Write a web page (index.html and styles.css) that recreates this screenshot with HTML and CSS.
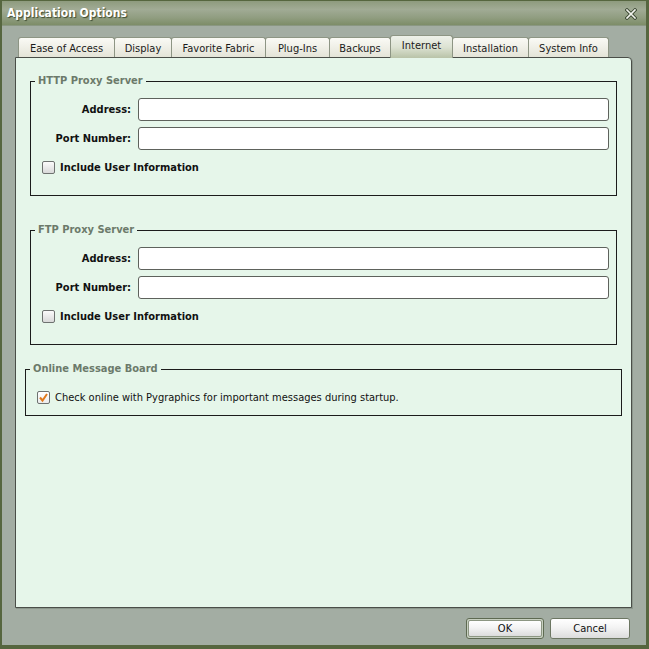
FILE: index.html
```html
<!DOCTYPE html>
<html>
<head>
<meta charset="utf-8">
<title>Application Options</title>
<link rel="stylesheet" href="styles.css">
</head>
<body>
<div class="window">
  <div class="titlebar">
    <span class="title">Application Options</span>
    <svg class="close" width="12" height="12" viewBox="0 0 12 12">
      <path d="M2 2 L10 10 M10 2 L2 10" stroke="#3d4a33" stroke-width="3.4" stroke-linecap="square"/>
      <path d="M2 2 L10 10 M10 2 L2 10" stroke="#f2f4ee" stroke-width="1.6" stroke-linecap="square"/>
    </svg>
  </div>
  <div class="main">
    <div class="tabs">
      <div class="tab t1">Ease of Access</div>
      <div class="tab t2">Display</div>
      <div class="tab t3">Favorite Fabric</div>
      <div class="tab t4">Plug-Ins</div>
      <div class="tab t5">Backups</div>
      <div class="tab t6 active">Internet</div>
      <div class="tab t7">Installation</div>
      <div class="tab t8">System Info</div>
    </div>
    <div class="panel">
      <fieldset class="group proxy first">
        <legend>HTTP Proxy Server</legend>
        <div class="form">
          <label class="lbl">Address:</label>
          <div class="input"></div>
          <label class="lbl">Port Number:</label>
          <div class="input"></div>
        </div>
        <div class="check-row">
          <span class="box"></span>
          <span class="check-label bold">Include User Information</span>
        </div>
      </fieldset>
      <fieldset class="group proxy second">
        <legend>FTP Proxy Server</legend>
        <div class="form">
          <label class="lbl">Address:</label>
          <div class="input"></div>
          <label class="lbl">Port Number:</label>
          <div class="input"></div>
        </div>
        <div class="check-row">
          <span class="box"></span>
          <span class="check-label bold">Include User Information</span>
        </div>
      </fieldset>
      <fieldset class="group board">
        <legend>Online Message Board</legend>
        <div class="check-row">
          <span class="box checked">
            <svg width="11" height="11" viewBox="0 0 11 11"><path d="M2 5.5 L4.5 8.5 L9 2" fill="none" stroke="#e07a1c" stroke-width="2"/></svg>
          </span>
          <span class="check-label">Check online with Pygraphics for important messages during startup.</span>
        </div>
      </fieldset>
    </div>
    <div class="buttons">
      <div class="btn ok"><span>OK</span></div>
      <div class="btn cancel"><span>Cancel</span></div>
    </div>
  </div>
</div>
</body>
</html>
```

FILE: styles.css
```css
* { box-sizing: border-box; }
html, body { margin: 0; padding: 0; }
body {
  width: 649px;
  height: 649px;
  overflow: hidden;
  font-family: "DejaVu Sans Condensed", "DejaVu Sans", sans-serif;
  font-size: 11px;
  color: #111;
}
.window {
  width: 649px;
  height: 649px;
  background: #a3ada3;
  border-style: solid;
  border-color: #56663f;
  border-width: 1px 3px 4px 2px;
  display: flex;
  flex-direction: column;
}
.titlebar {
  height: 25px;
  flex: none;
  display: flex;
  align-items: center;
  justify-content: space-between;
  padding: 0 9px 0 5px;
  background: linear-gradient(#8e9b7e 0%, #a1ab95 35%, #909d80 70%, #7d8d68 100%);
  border-bottom: 1px solid #8a9782;
}
.title {
  color: #fff;
  font-weight: bold;
  font-size: 12px;
  text-shadow: 1px 1px 1px #3c4a30;
}
.close { display: block; margin-top: 1px; }
.main {
  flex: 1;
  display: flex;
  flex-direction: column;
  padding: 9px 14px 0 13px;
}
.tabs {
  display: flex;
  align-items: flex-end;
  height: 22px;
  padding-left: 3px;
  position: relative;
  z-index: 1;
}
.tab {
  height: 20px;
  border: 1px solid #8d9584;
  border-bottom: none;
  border-radius: 3px 3px 0 0;
  background: linear-gradient(#fafaf5, #e4e4d8);
  display: flex;
  align-items: center;
  justify-content: center;
  color: #1b1b1b;
  padding-top: 1px;
  margin-right: -1px;
  white-space: nowrap;
}
.tab.active {
  background: linear-gradient(#eef1ea 0%, #dde3d3 50%, #b9c3a8 100%);
  padding-top: 0;
  padding-bottom: 3px;
  margin-bottom: -1px;
  height: 23px;
}
.t1 { width: 97px; }
.t2 { width: 58px; }
.t3 { width: 95px; }
.t4 { width: 65px; }
.t5 { width: 62px; }
.t6 { width: 63px; }
.t7 { width: 77px; }
.t8 { width: 81px; }
.panel {
  height: 551px;
  flex: none;
  background: #e6f6ea;
  border: 1px solid #4a4e48;
  border-radius: 0 4px 0 0;
  box-shadow: 1px 1px 0 #8c978c;
  display: flex;
  flex-direction: column;
  padding-top: 17px;
}
.group {
  border: 1px solid #1c1c1c;
  margin: 0;
  padding: 0;
  min-width: 0;
}
.group legend {
  font-weight: bold;
  color: #6c7a6a;
  padding: 0 3px;
  margin-left: -7px;
  line-height: 12px;
  font-size: 11px;
}
.proxy {
  margin: 0 14px;
  padding: 11px 7px 21px 11px;
}
.proxy.second { margin-top: 28px; }
.form {
  display: grid;
  grid-template-columns: 89px 1fr;
  column-gap: 7px;
  row-gap: 6px;
  align-items: center;
}
.lbl {
  text-align: right;
  font-weight: bold;
  color: #111;
}
.input {
  height: 23px;
  background: #fff;
  border: 1px solid #5e625c;
  border-radius: 3px;
}
.check-row {
  display: flex;
  align-items: center;
  height: 13px;
  gap: 5px;
}
.proxy .check-row { margin-top: 11px; }
.box {
  width: 13px;
  height: 13px;
  flex: none;
  border: 1px solid #6e7270;
  border-radius: 2px;
  background: linear-gradient(#fbfbfb, #d9d9d9);
  display: flex;
  align-items: center;
  justify-content: center;
}
.box.checked { background: linear-gradient(#ffffff, #ececec); }
.box svg { display: block; }
.check-label { color: #111; white-space: nowrap; }
.bold { font-weight: bold; }
.board {
  margin: 18px 9px 0 9px;
  padding: 16px 11px 11px 11px;
}
.buttons {
  display: flex;
  justify-content: flex-end;
  gap: 6px;
  padding-right: 2px;
  margin-top: 10px;
}
.btn {
  height: 21px;
  border-radius: 3px;
  display: flex;
  align-items: stretch;
  color: #111;
}
.btn span {
  flex: 1;
  display: flex;
  align-items: center;
  justify-content: center;
  border-radius: 2px;
  background: linear-gradient(#ffffff 0%, #f3f3f3 45%, #dcdcdc 100%);
}
.ok {
  width: 78px;
  border: 1px solid #5e6a52;
  padding: 1px;
  background: #c7cfc0;
}
.ok span { border: 1px solid #8c9682; }
.cancel {
  width: 80px;
  border: 1px solid #6c7662;
}
```
